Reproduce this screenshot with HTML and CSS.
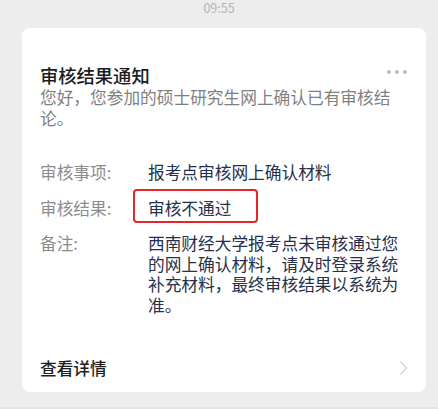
FILE: index.html
```html
<!DOCTYPE html>
<html lang="zh-CN">
<head>
<meta charset="UTF-8" />
<title>审核结果通知</title>
<meta name="viewport" content="width=device-width, initial-scale=1.0">
<link rel="stylesheet" href="styles.css">
</head>
<body>

  <div class="time">09:55</div>

  <div class="card">
    <div class="card-head">
      <h1>审核结果通知</h1>
      <span class="more"><i></i><i></i><i></i></span>
    </div>
    <p class="intro">您好，您参加的硕士研究生网上确认已有审核结论。</p>

    <div class="rows">
      <div class="row">
        <span class="label">审核事项:</span>
        <span class="value">报考点审核网上确认材料</span>
      </div>
      <div class="row">
        <span class="label">审核结果:</span>
        <span class="value"><span class="marked">审核不通过</span></span>
      </div>
      <div class="row">
        <span class="label">备注:</span>
        <span class="value">西南财经大学报考点未审核通过您的网上确认材料，请及时登录系统补充材料，最终审核结果以系统为准。</span>
      </div>
    </div>

    <div class="card-foot">
      <span>查看详情</span>
      <svg class="chevron" width="9" height="16" viewBox="0 0 9 16">
        <path d="M1.5 1.5 L7.5 8 L1.5 14.5" fill="none" stroke="#d6d6d6" stroke-width="1.5"/>
      </svg>
    </div>
  </div>

</body>
</html>
```

FILE: styles.css
```css
body {
  margin: 0;
  height: 407px;
  background-color: #ededed;
  border-bottom: 2px solid #e3e3e3;
  font-family: "Noto Sans CJK SC", "Noto Sans", sans-serif;
  overflow: hidden;
}
.time {
  height: 27px;
  padding-top: 1px;
  line-height: 13px;
  text-align: center;
  font-size: 12.5px;
  color: #b4b4b4;
}
.card {
  margin-left: 22px;
  width: 404px;
  height: 364px;
  box-sizing: border-box;
  padding: 36px 24px 0 18px;
  background-color: #ffffff;
  border-radius: 8px;
}
.card-head {
  display: flex;
  align-items: center;
  justify-content: space-between;
  height: 22px;
}
.card-head h1 {
  margin: 0;
  font-size: 18.3px;
  line-height: 22px;
  font-weight: 500;
  color: #1c1c1c;
}
.more {
  display: flex;
  gap: 4px;
  margin-right: -5px;
  margin-top: -6px;
}
.more i {
  width: 4px;
  height: 4px;
  border-radius: 50%;
  background-color: #bdbdbd;
}
.intro {
  margin: 1px 0 0;
  font-size: 16.7px;
  line-height: 21px;
  color: #7f7f7f;
}
.rows {
  margin-top: 33px;
}
.row {
  display: flex;
  margin-bottom: 15px;
  font-size: 16.7px;
  line-height: 20.5px;
}
.label {
  flex: 0 0 108px;
  color: #8c8c8c;
}
.value {
  flex: 1;
  color: #27304a;
}
.marked {
  position: relative;
}
.marked::after {
  content: "";
  position: absolute;
  left: -15px;
  top: -7px;
  width: 121px;
  height: 30px;
  border: 2px solid #e3262a;
  border-radius: 4px;
}
.card-foot {
  display: flex;
  align-items: center;
  justify-content: space-between;
  margin-top: 41px;
  font-size: 16.7px;
  font-weight: 500;
  color: #1e1e1e;
}
.chevron {
  margin-right: -6px;
}
```
